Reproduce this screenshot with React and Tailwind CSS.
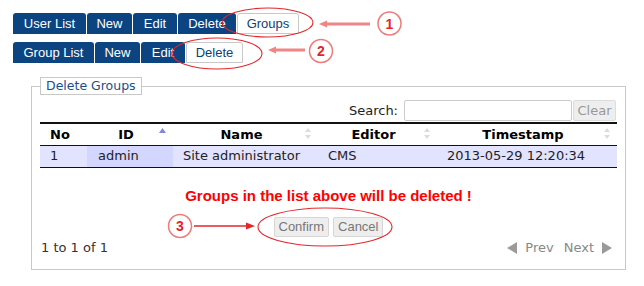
import React from "react";

const TopTabs = [
  { label: "User List", w: "w-[73px]" },
  { label: "New", w: "w-[45px]" },
  { label: "Edit", w: "w-[44px]" },
  { label: "Delete", w: "w-[58px]" },
];

const SubTabs = [
  { label: "Group List", w: "w-[81px]" },
  { label: "New", w: "w-[45px]" },
  { label: "Edit", w: "w-[44px]" },
];

const Tab = ({ label, w }) => (
  <div
    className={`${w} h-[21px] flex items-center justify-center bg-[#0b4480] text-white rounded-t-[3px] text-[13px] leading-none`}
  >
    {label}
  </div>
);

const ActiveTab = ({ label, w }) => (
  <div
    className={`${w} h-[21px] flex items-center justify-center bg-white border border-[#c8c8c8] text-[#0b3f78] rounded-t-[3px] text-[13px] leading-none`}
  >
    {label}
  </div>
);

const SortBoth = () => (
  <svg className="absolute right-[7px] top-[4px]" width="6" height="11" viewBox="0 0 6 11">
    <path d="M3 0 L6 4 L0 4 Z" fill="#dcdcdc" />
    <path d="M0 7 L6 7 L3 11 Z" fill="#dcdcdc" />
  </svg>
);

const SortAsc = () => (
  <svg className="absolute right-[7px] top-[4px]" width="7" height="6" viewBox="0 0 7 6">
    <path d="M3.5 0 L7 5 L0 5 Z" fill="#8185dd" />
  </svg>
);

const Annotations = () => (
  <svg
    className="absolute left-0 top-0 pointer-events-none"
    width="644"
    height="286"
    viewBox="0 0 644 286"
  >
    <ellipse cx="267.5" cy="22.5" rx="45.5" ry="14.5" fill="none" stroke="#e4262b" strokeWidth="1.1" />
    <ellipse cx="217" cy="53.5" rx="45" ry="15.5" fill="none" stroke="#e4262b" strokeWidth="1.1" />
    <ellipse cx="325" cy="227" rx="67" ry="19" fill="none" stroke="#e4262b" strokeWidth="1.1" />

    <line x1="324" y1="24" x2="370" y2="24" stroke="#f08585" strokeWidth="3" />
    <path d="M319 24 L327 20.5 L327 27.5 Z" fill="#f08585" />
    <line x1="273" y1="50" x2="305" y2="50" stroke="#f08585" strokeWidth="3" />
    <path d="M268 50 L276 46.5 L276 53.5 Z" fill="#f08585" />
    <line x1="194" y1="226" x2="248" y2="226" stroke="#e4262b" strokeWidth="1.3" />
    <path d="M255 226 L246 222.5 L246 229.5 Z" fill="#e4262b" />

    <circle cx="389.5" cy="23.5" r="11.5" fill="white" stroke="#f07a7a" strokeWidth="1.5" />
    <text x="389.5" y="28.5" textAnchor="middle" fontFamily="Liberation Sans, Arial, sans-serif" fontWeight="bold" fontSize="14" fill="#e8212b">1</text>
    <circle cx="321" cy="51" r="11.5" fill="white" stroke="#f07a7a" strokeWidth="1.5" />
    <text x="321" y="56" textAnchor="middle" fontFamily="Liberation Sans, Arial, sans-serif" fontWeight="bold" fontSize="14" fill="#e8212b">2</text>
    <circle cx="180" cy="226" r="11.5" fill="white" stroke="#f07a7a" strokeWidth="1.5" />
    <text x="180" y="231" textAnchor="middle" fontFamily="Liberation Sans, Arial, sans-serif" fontWeight="bold" fontSize="14" fill="#e8212b">3</text>
  </svg>
);

export default function App() {
  return (
    <div className="relative w-[644px] h-[286px] bg-white overflow-hidden font-['DejaVu_Sans',sans-serif] text-[13px]">
      <div className="pt-[13px] pl-[13px] font-['Liberation_Sans',Arial,sans-serif]">
        <div className="flex gap-[1px]">
          {TopTabs.map((t) => (
            <Tab key={t.label} {...t} />
          ))}
          <ActiveTab label="Groups" w="w-[62px]" />
        </div>
        <div className="flex gap-[1px] mt-[8px]">
          {SubTabs.map((t) => (
            <Tab key={t.label} {...t} />
          ))}
          <ActiveTab label="Delete" w="w-[57px]" />
        </div>
      </div>

      <fieldset className="ml-[31px] mt-[14px] w-[595px] border border-[#c8c8c8] px-[8px] pt-[5px] pb-[13px]">
        <legend className="border border-[#c8c8c8] px-[5px] h-[18px] leading-[16px] text-[12.5px] text-[#1c4e8e]">
          Delete Groups
        </legend>

        <div className="flex justify-end items-center pr-[1px] text-[#222]">
          <span className="mr-[6px]">Search:</span>
          <input className="w-[168px] h-[21px] border border-[#cccccc] rounded-[2px] outline-none" />
          <button className="ml-[1px] w-[43px] h-[21px] bg-[#eeeeee] border border-[#dddddd] rounded-[2px] text-[#999] leading-none">
            Clear
          </button>
        </div>

        <table className="w-[577px] table-fixed border-collapse mt-[1px] border-t-2 border-[#111]">
          <colgroup>
            <col className="w-[47px]" />
            <col className="w-[86px]" />
            <col className="w-[145px]" />
            <col className="w-[119px]" />
            <col className="w-[180px]" />
          </colgroup>
          <thead>
            <tr className="border-b border-[#111] text-black font-bold">
              <th className="h-[22px] pl-[10px] pr-[18px] text-center">No</th>
              <th className="relative pl-[10px] pr-[18px] text-center">
                ID
                <SortAsc />
              </th>
              <th className="relative pl-[10px] pr-[18px] text-center">
                Name
                <SortBoth />
              </th>
              <th className="relative pl-[10px] pr-[18px] text-center">
                Editor
                <SortBoth />
              </th>
              <th className="relative pl-[10px] pr-[18px] text-center">
                Timestamp
                <SortBoth />
              </th>
            </tr>
          </thead>
          <tbody>
            <tr className="bg-[#e2e4ff] border-b border-[#111] text-[#222]">
              <td className="h-[22px] pl-[10px]">1</td>
              <td className="pl-[11px] bg-[#d3d6ff]">admin</td>
              <td className="pl-[10px]">Site administrator</td>
              <td className="pl-[10px]">CMS</td>
              <td className="pl-[10px]">2013-05-29 12:20:34</td>
            </tr>
          </tbody>
        </table>

        <p className="mt-[20px] text-center text-[15px] leading-[16px] font-bold text-[#ff0000] font-['Liberation_Sans',Arial,sans-serif]">
          Groups in the list above will be deleted !
        </p>

        <div className="mt-[13px] flex justify-center gap-[4px] font-['Liberation_Sans',Arial,sans-serif]">
          <button className="h-[20px] px-[4px] bg-[#eeeeee] border border-[#d6d6d6] rounded-[2px] text-[#777] text-[13px] leading-none">
            Confirm
          </button>
          <button className="h-[20px] px-[4px] bg-[#eeeeee] border border-[#d6d6d6] rounded-[2px] text-[#777] text-[13px] leading-none">
            Cancel
          </button>
        </div>

        <div className="mt-[3px] flex items-center justify-between leading-[16px]">
          <span className="pl-[1px] text-[#333]">1 to 1 of 1</span>
          <div className="flex items-center text-[#888] pr-[4px]">
            <svg width="12" height="14" viewBox="0 0 12 14" className="mr-[7px]">
              <path d="M11 1 L11 13 L1 7 Z" fill="#9a9a9a" />
            </svg>
            <span>Prev</span>
            <span className="ml-[10px]">Next</span>
            <svg width="12" height="14" viewBox="0 0 12 14" className="ml-[7px]">
              <path d="M1 1 L1 13 L11 7 Z" fill="#9a9a9a" />
            </svg>
          </div>
        </div>
      </fieldset>

      <Annotations />
    </div>
  );
}
